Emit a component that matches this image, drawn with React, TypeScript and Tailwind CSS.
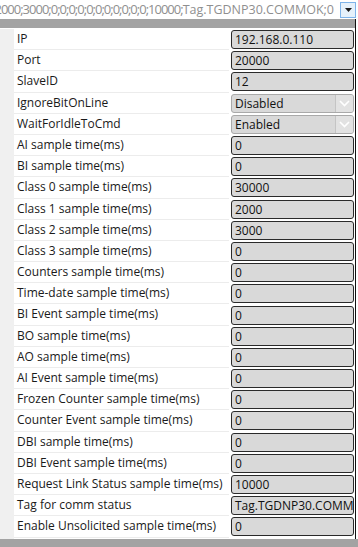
import React from 'react';

type Row = { label: string; value: string; kind?: 'text' | 'select' };

const rows: Row[] = [
  { label: 'IP', value: '192.168.0.110' },
  { label: 'Port', value: '20000' },
  { label: 'SlaveID', value: '12' },
  { label: 'IgnoreBitOnLine', value: 'Disabled', kind: 'select' },
  { label: 'WaitForIdleToCmd', value: 'Enabled', kind: 'select' },
  { label: 'AI sample time(ms)', value: '0' },
  { label: 'BI sample time(ms)', value: '0' },
  { label: 'Class 0 sample time(ms)', value: '30000' },
  { label: 'Class 1 sample time(ms)', value: '2000' },
  { label: 'Class 2 sample time(ms)', value: '3000' },
  { label: 'Class 3 sample time(ms)', value: '0' },
  { label: 'Counters sample time(ms)', value: '0' },
  { label: 'Time-date sample time(ms)', value: '0' },
  { label: 'BI Event sample time(ms)', value: '0' },
  { label: 'BO sample time(ms)', value: '0' },
  { label: 'AO sample time(ms)', value: '0' },
  { label: 'AI Event sample time(ms)', value: '0' },
  { label: 'Frozen Counter sample time(ms)', value: '0' },
  { label: 'Counter Event sample time(ms)', value: '0' },
  { label: 'DBI sample time(ms)', value: '0' },
  { label: 'DBI Event sample time(ms)', value: '0' },
  { label: 'Request Link Status sample time(ms)', value: '10000' },
  { label: 'Tag for comm status', value: 'Tag.TGDNP30.COMMOK' },
  { label: 'Enable Unsolicited sample time(ms)', value: '0' },
];

function ValueBox({ row }: { row: Row }) {
  if (row.kind === 'select') {
    return (
      <div className="flex h-[19px] w-full min-w-0 overflow-hidden rounded-[3px] border border-[#a9a9a9] bg-[#d9d9d9]">
        <span className="min-w-0 flex-1 truncate pl-[3px] leading-[17px] text-[#111]">{row.value}</span>
        <span className="flex w-[18px] items-center justify-center border-l border-[#c4c4c4] bg-[#e2e2e2]">
          <svg width="11" height="7" viewBox="0 0 11 7" fill="none">
            <path d="M1 1l4.5 4.5L10 1" stroke="#ffffff" strokeWidth="1.6" />
          </svg>
        </span>
      </div>
    );
  }
  return (
    <div className="h-[19px] w-full min-w-0 overflow-hidden whitespace-nowrap rounded-[3px] border border-[#2a2a2a] bg-[#d9d9d9] pl-[3px] leading-[17px] text-[#111]">
      {row.value}
    </div>
  );
}

export default function App() {
  return (
    <div
      className="flex h-[547px] w-[358px] flex-col overflow-hidden bg-white text-[12px]"
      style={{ fontFamily: '"Open Sans", "Noto Sans", sans-serif' }}
    >
      {/* Collapsed value summary, scrolled to its end */}
      <div className="flex h-[19px] items-center">
        <div className="flex min-w-0 flex-1 justify-end overflow-hidden whitespace-nowrap pr-[6px] leading-[19px] text-[#8f8f8f]">
          <span className="text-[13px] tracking-[-1px]">0;2000;3000;0;0;0;0;0;0;0;0;0;0;0;10000;</span>
          <span className="text-[12.5px]">Tag.TGDNP30.COMMOK;0</span>
        </div>
        <div className="mr-[2px] flex h-[16px] w-[16px] items-center justify-center border border-[#7eb4ea] bg-[#e5f1fb]">
          <svg width="7" height="4" viewBox="0 0 7 4">
            <path d="M0 0h7L3.5 4z" fill="#1a1a1a" />
          </svg>
        </div>
      </div>

      {/* Property grid */}
      <div className="mr-[2px] flex flex-1 flex-col border-r border-[#111]">
        <div className="h-[9px] bg-[#a3a3a3]" />
        <div className="flex flex-col pt-[1px]">
          {rows.map((row) => (
            <div key={row.label} className="flex h-[21.2px]">
              <div className="w-[14px] shrink-0 bg-[#f0f0f0]" />
              <div className="w-[215px] shrink-0 overflow-hidden whitespace-nowrap border-b border-[#ececec] pl-[3px] leading-[20px] text-[#1a1a1a]">
                {row.label}
              </div>
              <div className="flex min-w-0 flex-1 items-center pl-[2px] pr-[1px]">
                <ValueBox row={row} />
              </div>
            </div>
          ))}
        </div>
        <div className="flex flex-1">
          <div className="w-[14px] bg-[#f0f0f0]" />
        </div>
      </div>
      <div className="h-[8px] bg-[#a3a3a3]" />
    </div>
  );
}
